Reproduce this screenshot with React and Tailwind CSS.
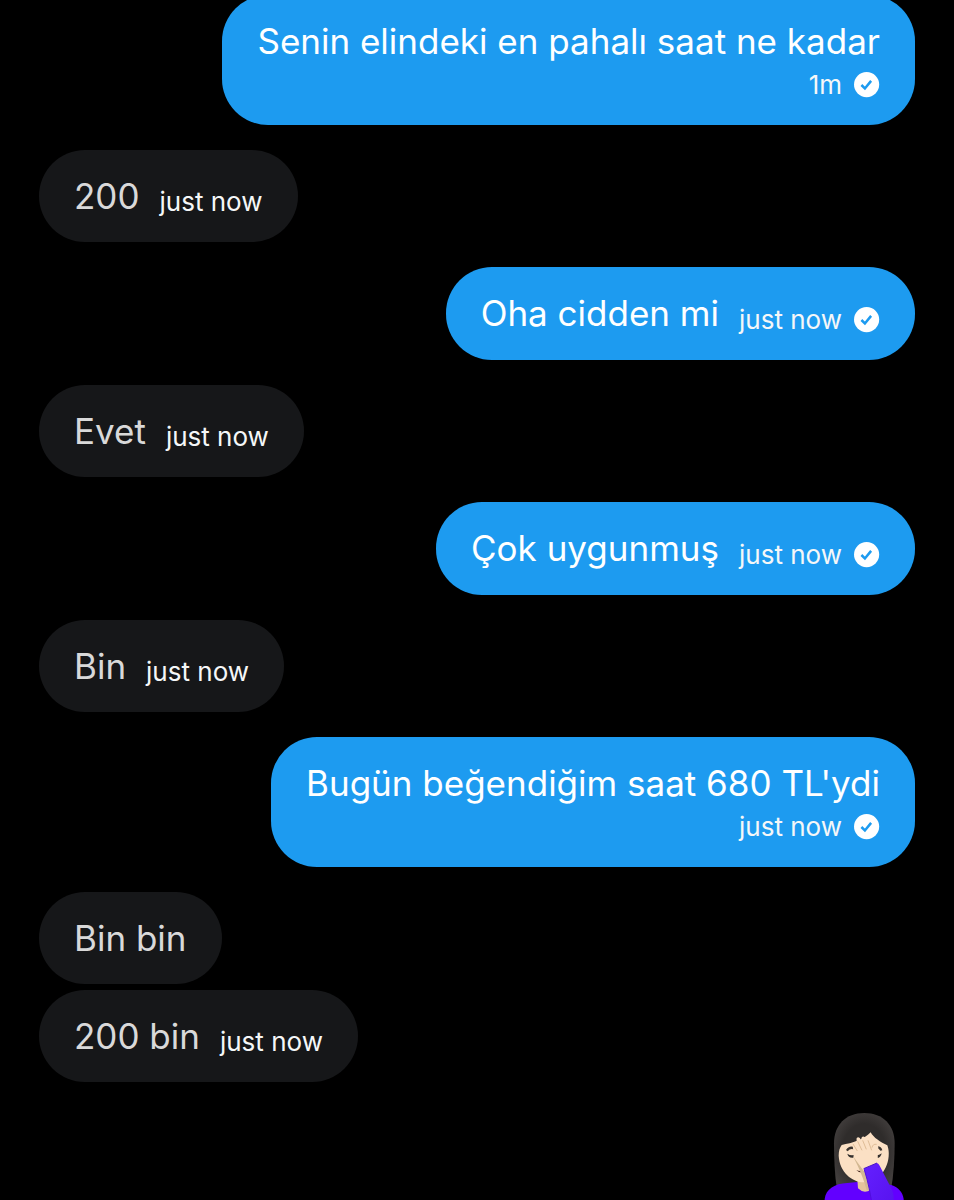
const messages = [
  { id: 1, mine: true, text: "Senin elindeki en pahalı saat ne kadar", time: "1m", stacked: true },
  { id: 2, mine: false, text: "200", time: "just now" },
  { id: 3, mine: true, text: "Oha cidden mi", time: "just now" },
  { id: 4, mine: false, text: "Evet", time: "just now" },
  { id: 5, mine: true, text: "Çok uygunmuş", time: "just now" },
  { id: 6, mine: false, text: "Bin", time: "just now" },
  { id: 7, mine: true, text: "Bugün beğendiğim saat 680 TL'ydi", time: "just now", stacked: true },
  { id: 8, mine: false, text: "Bin bin", grouped: true },
  { id: 9, mine: false, text: "200 bin", time: "just now" },
];

function SentIcon() {
  return (
    <svg viewBox="0 0 26 26" className="size-[26px] shrink-0" role="img" aria-label="Sent">
      <circle cx="12.6" cy="12.6" r="12.6" fill="#fff" />
      <path d="M7.4 13l3.5 3.5 6.2-7.6" fill="none" stroke="#1d9bf0" strokeWidth="2.5" />
    </svg>
  );
}

function FacepalmEmoji() {
  return (
    <svg viewBox="27 36 306 306" className="size-[102px]" role="img" aria-label="Woman facepalming">
      <defs>
        <radialGradient id="hair" cx="0.5" cy="0.5" r="0.6">
          <stop offset="0.6" stopColor="#2f2c2b" />
          <stop offset="1" stopColor="#454140" />
        </radialGradient>
        <linearGradient id="sleeve" x1="0" y1="0" x2="1" y2="1">
          <stop offset="0" stopColor="#6420ff" />
          <stop offset="1" stopColor="#5712ee" />
        </linearGradient>
      </defs>
      {/* hair */}
      <path
        d="M99 285C92 240 90 190 90 145C90 90 125 54 181 54C237 54 272 90 272 145C272 190 269 240 261 285Z"
        fill="url(#hair)"
      />
      {/* shirt */}
      <path d="M62 345V312C66 282 92 266 130 264L160 261H199L262 270C284 278 296 292 299 312V345Z" fill="#6200ff" />
      {/* neck */}
      <path d="M160 250h40v34q-20 14-38-4z" fill="#e5c49d" />
      {/* face */}
      <path
        d="M104 182C104 168 107 158 113 150C145 144 180 134 200 112C208 128 230 142 250 151C254 162 255 172 254 184C250 232 216 262 181 262C144 262 107 232 104 182Z"
        fill="#fbe0c4"
      />
      <path d="M126 165q9-16 28-8l-3 7q-12-5-20 5z" fill="#3b342f" />
      <path d="M216 154q16-2 19 12l-6 1q-3-7-13-7z" fill="#3b342f" />
      <path d="M130 176q9 6 19 4l-1 8q-15 2-18-12z" fill="#34302d" />
      <path d="M216 180q10 2 17-5q-3 16-17 14z" fill="#34302d" />
      <path d="M157 225q10 5 20 2l3 5q-14 3-23-7z" fill="#4a2a22" />
      <path d="M147 184L188 240L197 284L188 286C180 256 168 224 147 184Z" fill="#d3b892" />
      {/* hand */}
      <path
        d="M150 184L146 152Q145 142 151 142Q156 142 158 151L166 162L158 137Q156 127 163 127Q168 127 171 135L181 158L172 134Q172 123 180 125Q185 126 187 133L198 160L188 134Q188 123 195 125Q200 127 202 134L209 155L205 148Q211 141 219 148Q226 156 221 170Q222 192 221 206L181 223Q168 202 150 184Z"
        fill="#fbe0c4"
      />
      <path d="M147 147L160 168M161 139L174 166M176 136L187 163M192 136L203 166M204 158Q206 146 218 148" fill="none" stroke="#dfbd97" strokeWidth="3" />
      {/* sleeve */}
      <path d="M179 221L219 204Q224 206 227 212L264 284C272 305 270 325 262 345H207C202 310 195 265 179 221Z" fill="url(#sleeve)" />
      <path d="M179 221L219 204" stroke="#4a17c4" strokeWidth="3" />
      <path d="M181 224C193 262 200 300 206 340" fill="none" stroke="#4f10dc" strokeWidth="3" />
    </svg>
  );
}

function Bubble({ message }) {
  const { mine, text, time, stacked, grouped } = message;

  return (
    <li className={`flex ${mine ? "justify-end" : "justify-start"} ${grouped ? "mb-1.5" : "mb-[25px]"}`}>
      <div
        className={`flex rounded-[46px] px-[35px] py-[23px] ${mine ? "bg-[#1d9bf0]" : "bg-[#161719]"} ${
          stacked ? "flex-col items-end gap-[3px]" : "items-end gap-5"
        }`}
      >
        <p className={`text-[35px] ${mine ? "leading-[47px] text-white" : "leading-[46px] text-[#d9d9d9]"}`}>
          {text}
        </p>
        {time && (
          <div className="flex shrink-0 items-center gap-3 text-[26px] leading-[34px] text-[#f5f7f8]">
            <time>{time}</time>
            {mine && <SentIcon />}
          </div>
        )}
      </div>
    </li>
  );
}

export default function App() {
  return (
    <main className="h-screen overflow-hidden bg-black px-[39px] font-['Inter',sans-serif]">
      {/* the oldest message is scrolled slightly past the top edge */}
      <ul className="-mt-[5px]">
        {messages.map((m) => (
          <Bubble key={m.id} message={m} />
        ))}
        <li className="flex justify-end">
          <FacepalmEmoji />
        </li>
      </ul>
    </main>
  );
}
